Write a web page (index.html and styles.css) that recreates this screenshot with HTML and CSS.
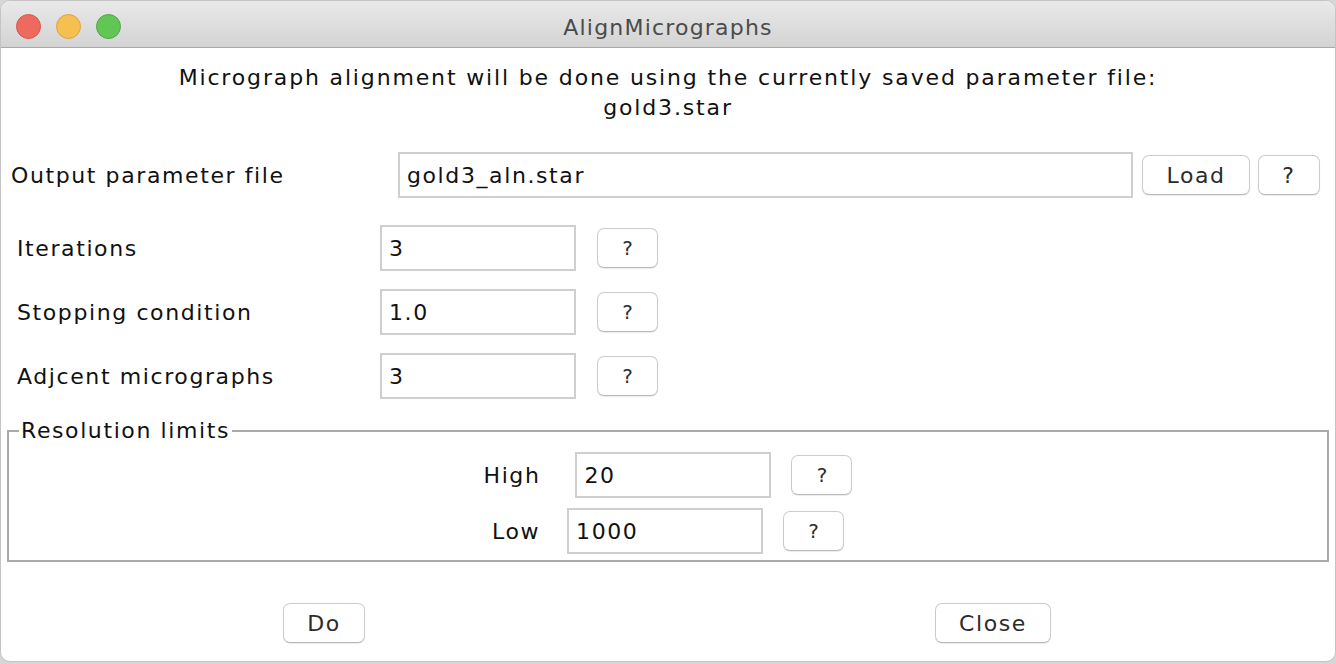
FILE: index.html
```html
<!DOCTYPE html>
<html>
<head>
<meta charset="utf-8">
<link rel="stylesheet" href="styles.css">
</head>
<body>
<div class="window">
  <div class="titlebar">
    <div class="lights">
      <span class="light red"></span>
      <span class="light yellow"></span>
      <span class="light green"></span>
    </div>
    <div class="title">AlignMicrographs</div>
  </div>
  <div class="content">
    <div class="header">
      <div>Micrograph alignment will be done using the currently saved parameter file:</div>
      <div>gold3.star</div>
    </div>
    <div class="row-file">
      <div class="label-file">Output parameter file</div>
      <div class="field field-wide">gold3_aln.star</div>
      <div class="btn btn-load">Load</div>
      <div class="btn btn-q-wide">?</div>
    </div>
    <div class="params">
      <div class="row-param">
        <div class="label-param">Iterations</div>
        <div class="field field-small">3</div>
        <div class="btn btn-q">?</div>
      </div>
      <div class="row-param">
        <div class="label-param">Stopping condition</div>
        <div class="field field-small">1.0</div>
        <div class="btn btn-q">?</div>
      </div>
      <div class="row-param">
        <div class="label-param">Adjcent micrographs</div>
        <div class="field field-small">3</div>
        <div class="btn btn-q">?</div>
      </div>
    </div>
    <div class="group">
      <div class="legend">Resolution limits</div>
      <div class="row-res row-high">
        <div class="label-res">High</div>
        <div class="field field-small">20</div>
        <div class="btn btn-q">?</div>
      </div>
      <div class="row-res row-low">
        <div class="label-res">Low</div>
        <div class="field field-small">1000</div>
        <div class="btn btn-q">?</div>
      </div>
    </div>
    <div class="actions">
      <div class="btn btn-do">Do</div>
      <div class="btn btn-close">Close</div>
    </div>
  </div>
</div>
</body>
</html>
```

FILE: styles.css
```css
* { box-sizing: border-box; }
html, body {
  margin: 0;
  padding: 0;
  background: #d6d6d6;
  width: 1336px;
  height: 664px;
  overflow: hidden;
}
body {
  font-family: "DejaVu Sans", "Liberation Sans", sans-serif;
  color: #1d1d1d;
  letter-spacing: 1.6px;
}
.window {
  width: 1336px;
  height: 662px;
  background: #ffffff;
  border-radius: 10px;
  border: 1px solid #c4c4c4;
  overflow: hidden;
  display: flex;
  flex-direction: column;
}
.titlebar {
  height: 47px;
  flex: none;
  background: linear-gradient(#e9e9e9, #d3d3d3);
  border-bottom: 1px solid #a8a8a8;
  position: relative;
  display: flex;
  align-items: center;
  justify-content: center;
}
.lights {
  position: absolute;
  left: 15px;
  top: 13px;
  display: flex;
  gap: 15px;
}
.light {
  width: 25px;
  height: 25px;
  border-radius: 50%;
  display: block;
}
.red { background: #ee6a5f; border: 1px solid #d8564c; }
.yellow { background: #f5c04f; border: 1px solid #dea53a; }
.green { background: #62c655; border: 1px solid #4ea843; }
.title {
  font-size: 22px;
  letter-spacing: 1.2px;
  color: #4b4b4b;
  margin-top: 6px;
}
.content {
  flex: 1;
  display: flex;
  flex-direction: column;
}
.header {
  text-align: center;
  font-size: 22px;
  letter-spacing: 1.85px;
  line-height: 30px;
  padding-top: 15px;
  color: #111;
}
.row-file {
  display: flex;
  align-items: center;
  margin-top: 29px;
  padding-left: 10px;
  height: 46px;
}
.label-file {
  width: 387px;
  font-size: 22px;
  color: #111;
}
.field {
  height: 46px;
  border: 2px solid #cfcfcf;
  background: #fff;
  font-size: 22px;
  padding-left: 7px;
  display: flex;
  align-items: center;
  color: #111;
}
.field-wide {
  width: 735px;
}
.field-small {
  width: 196px;
}
.btn {
  height: 40px;
  border: 1px solid #cbcbcb;
  border-bottom-color: #b9b9b9;
  border-radius: 7px;
  background: #fff;
  box-shadow: 0 1px 1px rgba(0,0,0,0.08);
  display: flex;
  align-items: center;
  justify-content: center;
  font-size: 22px;
  color: #2b2b2b;
}
.btn-load {
  width: 108px;
  margin-left: 9px;
}
.btn-q-wide {
  width: 62px;
  margin-left: 8px;
}
.btn-q {
  width: 61px;
  font-size: 20px;
  margin-left: 21px;
  letter-spacing: 0;
}
.params {
  margin-top: 27px;
  display: flex;
  flex-direction: column;
  gap: 18px;
}
.row-param {
  display: flex;
  align-items: center;
  padding-left: 16px;
  height: 46px;
}
.label-param {
  width: 363px;
  font-size: 22px;
  color: #111;
}
.group {
  margin: 31px 6px 0 6px;
  height: 132px;
  border: 2px solid #a9a9a9;
  position: relative;
  padding-top: 20px;
  display: flex;
  flex-direction: column;
  gap: 10px;
}
.legend {
  position: absolute;
  left: 10px;
  top: -14px;
  background: #fff;
  font-size: 22px;
  line-height: 26px;
  padding: 0 2px;
  color: #111;
}
.row-res {
  display: flex;
  align-items: center;
  justify-content: center;
  height: 46px;
}
.label-res {
  font-size: 22px;
  color: #111;
}
.row-high .label-res { margin-right: 35px; }
.row-low .label-res { margin-right: 27px; }
.row-res .btn-q { margin-left: 20px; }
.actions {
  display: flex;
  margin-top: 41px;
  padding-left: 282px;
}
.btn-do {
  width: 82px;
}
.btn-close {
  width: 116px;
  margin-left: 570px;
}
```
